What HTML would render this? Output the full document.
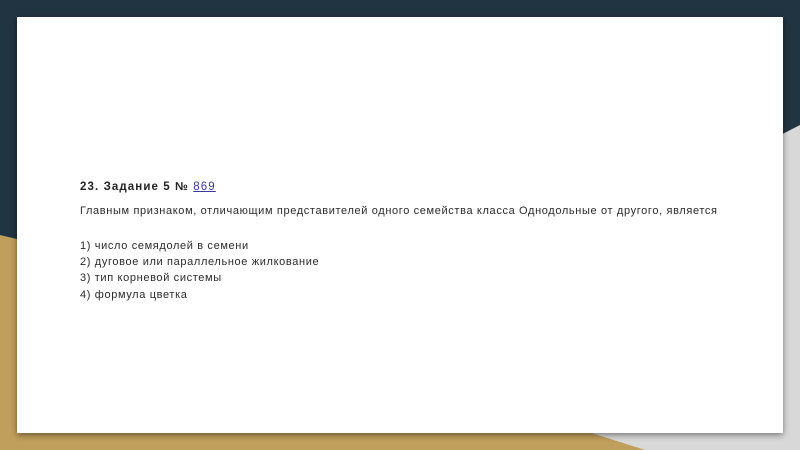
<!DOCTYPE html>
<html><head><meta charset="utf-8"><style>
body{margin:0;width:800px;height:450px;overflow:hidden;position:relative;background:#c09e5c;font-family:"Liberation Sans",sans-serif}
svg.bg{position:absolute;left:0;top:0}
.card{position:absolute;left:17px;top:17px;width:766px;height:416px;background:#fff;box-shadow:0 2px 6px rgba(0,0,0,.45)}
.t{position:absolute;left:80px;font-size:11px;color:#2a2a2a;white-space:nowrap;letter-spacing:0.64px}
.h{font-size:11.5px;letter-spacing:1.1px}
b{color:#222}
a{color:#3a3a9a;text-decoration:underline;font-weight:normal}
</style></head><body>
<svg class="bg" width="800" height="450">
<polygon points="800,125 800,450 645,450 300,340" fill="#d8d8d8"/>
<polygon points="0,0 800,0 800,125 400,330 0,235" fill="#213441"/>
</svg>
<div class="card"></div>
<div class="t h" style="top:181px"><b>23. Задание 5 № <a>869</a></b></div>
<div class="t" style="top:205px">Главным признаком, отличающим представителей одного семейства класса Однодольные от другого, является</div>
<div class="t" style="top:240px">1) число семядолей в семени</div>
<div class="t" style="top:256px">2) дуговое или параллельное жилкование</div>
<div class="t" style="top:272px">3) тип корневой системы</div>
<div class="t" style="top:289px">4) формула цветка</div>
</body></html>
